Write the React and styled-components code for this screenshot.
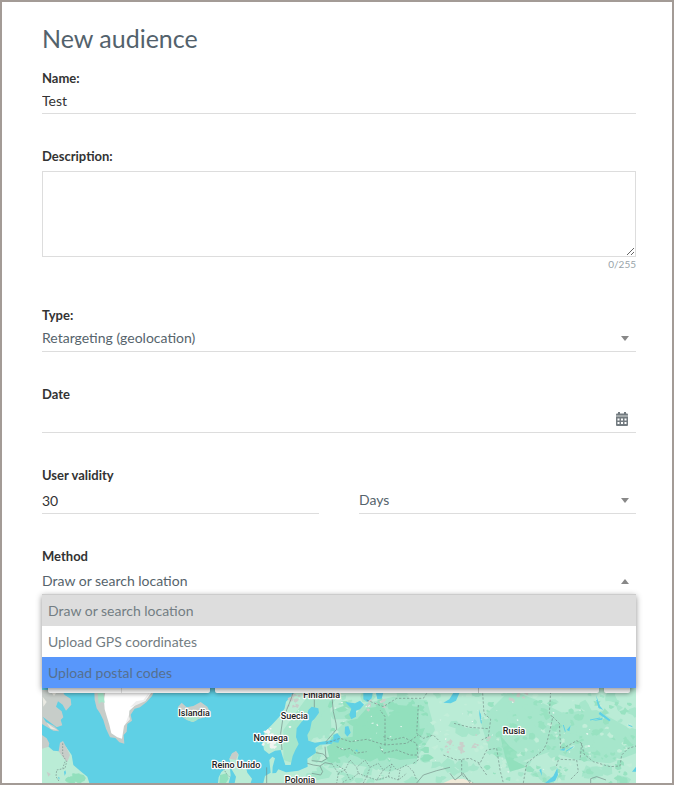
import React, { useState } from "react";
import styled, { createGlobalStyle } from "styled-components";

const GlobalStyle = createGlobalStyle`
  * {
    box-sizing: border-box;
  }

  body {
    margin: 0;
    background: #ffffff;
    font-family: Lato, "Liberation Sans", sans-serif;
    font-size: 14px;
    color: #333333;
  }

  input, select, textarea, button {
    font: inherit;
    color: inherit;
  }
`;

const Page = styled.main`
  display: flex;
  flex-direction: column;
  height: 100vh;
  overflow: hidden;
  border: 2px solid #a39b96;
  padding: 20px 36px 0 40px;
`;

const Title = styled.h1`
  margin: 0 0 14px;
  font-weight: 400;
  font-size: 25px;
  line-height: 32px;
  color: #53626c;
`;

const Form = styled.form`
  display: flex;
  flex-direction: column;
  gap: 32px;
`;

const Field = styled.div`
  display: flex;
  flex-direction: column;
`;

const Label = styled.label`
  font-weight: 700;
  font-size: 13px;
  line-height: 20px;
  color: #333333;
`;

const Columns = styled.div`
  display: grid;
  grid-template-columns: 1fr 1fr;
  gap: 40px;
`;

const Control = styled.div`
  position: relative;
  display: flex;
  height: ${({ $height }) => $height || 29}px;
  padding-bottom: ${({ $height }) => ($height ? 2 : 0)}px;
  border-bottom: 1px solid #dddddd;
`;

const TextInput = styled.input`
  flex: 1;
  min-width: 0;
  padding: 2px 0 0;
  border: 0;
  outline: 0;
  background: transparent;
`;

const Select = styled.select`
  flex: 1;
  min-width: 0;
  padding: 0;
  border: 0;
  outline: 0;
  appearance: none;
  background: transparent;
  color: #56646c;
`;

const Caret = styled.span`
  position: absolute;
  right: 7px;
  bottom: 10px;
  border: 4px solid transparent;
  border-top: ${({ $open }) => ($open ? "0" : "5px solid #888888")};
  border-bottom: ${({ $open }) => ($open ? "5px solid #888888" : "0")};
  pointer-events: none;
`;

const TextArea = styled.textarea`
  height: 86px;
  margin-top: 5px;
  padding: 6px;
  border: 1px solid #dddddd;
  border-radius: 0;
  outline: 0;
  resize: vertical;
`;

const Counter = styled.span`
  align-self: flex-end;
  margin-bottom: 2px;
  font-size: 10px;
  line-height: 14px;
  color: #98a3a9;
`;

const IconButton = styled.button`
  display: flex;
  align-items: center;
  padding: 2px 8px 0;
  border: 0;
  background: transparent;
  color: #737b80;
  cursor: pointer;
`;

const Menu = styled.ul`
  position: absolute;
  z-index: 2;
  top: 100%;
  left: 0;
  right: 0;
  margin: 0;
  padding: 0;
  list-style: none;
  background: #ffffff;
  border-top: 1px solid #cccccc;
  box-shadow: 0 2px 6px rgba(0, 0, 0, 0.45);
`;

const Option = styled.li`
  padding: 0 6px;
  line-height: 31px;
  color: ${({ $active }) => ($active ? "#56708f" : "#737d83")};
  background: ${({ $active, $selected }) =>
    $active ? "#5897fb" : $selected ? "#dddddd" : "#ffffff"};
  cursor: pointer;
`;

const MapPanel = styled.section`
  position: relative;
  flex: 1;
  min-height: 0;
  margin-top: 48px;
  overflow: hidden;
  background: #5fd0e5;
`;

const MapDrawing = styled.svg`
  display: block;
  width: 100%;
  height: 100%;
`;

const MapBar = styled.div`
  position: absolute;
  top: 10px;
  left: 6px;
  right: 6px;
  display: flex;
  gap: 5px;
  height: 40px;
`;

const MapGroup = styled.div`
  display: flex;
  flex: ${({ $flex }) => $flex || "none"};
  border-radius: 2px;
  background: #ffffff;
  box-shadow: 0 1px 4px rgba(0, 0, 0, 0.3);
`;

const MapButton = styled.button`
  width: ${({ $width }) => $width}px;
  padding: 0;
  border: 0;
  border-right: 1px solid #e0e0e0;
  background: transparent;

  &:last-child {
    border-right: 0;
  }
`;

const MapSearch = styled.input`
  flex: 1;
  min-width: 0;
  border: 0;
  border-right: 1px solid #cccccc;
  background: transparent;
`;

const Place = styled.text`
  font-family: Roboto, "Liberation Sans", sans-serif;
  font-weight: 500;
  font-size: 27px;
  text-anchor: middle;
  fill: #222222;
  stroke: #ffffff;
  stroke-width: 7px;
  stroke-linejoin: round;
  paint-order: stroke;
`;

const methods = [
  "Draw or search location",
  "Upload GPS coordinates",
  "Upload postal codes",
];

const places = [
  ["Islandia", 492, 108],
  ["Reino Unido", 618, 264],
  ["Noruega", 722, 183],
  ["Suecia", 793, 118],
  ["Finlandia", 875, 55],
  ["Polonia", 810, 308],
  ["Rusia", 1452, 162],
];

// small irregular patches of vegetation, seeded so they never move
const patches = (seed, count, [x0, y0, x1, y1], size) => {
  let s = seed;
  const next = () => {
    s = (s * 16807) % 2147483647;
    return s / 2147483647;
  };
  let d = "";
  for (let i = 0; i < count; i++) {
    const cx = x0 + next() * (x1 - x0);
    const cy = y0 + next() * (y1 - y0);
    const r = size * (0.4 + next());
    for (let k = 0; k < 8; k++) {
      const a = (k * Math.PI) / 4;
      const q = r * (0.4 + next() * 0.9);
      const x = Math.round(cx + Math.cos(a) * q * 1.3);
      const y = Math.round(cy + Math.sin(a) * q);
      d += `${k ? "L" : "M"}${x} ${y}`;
    }
    d += "Z";
  }
  return d;
};

const CalendarIcon = () => (
  <svg width="12" height="14" viewBox="0 0 12 14" aria-hidden="true">
    <path d="M2 0h2v2H2zM8 0h2v2H8z" fill="currentColor" />
    <path d="M0 2.5Q0 1.5 1 1.5h10q1 0 1 1V4H0z" fill="currentColor" />
    <path d="M0 3h12v2.2H0z" fill="#a3a9ab" />
    <path
      fillRule="evenodd"
      fill="currentColor"
      d="M0 5h12v8q0 1-1 1H1q-1 0-1-1zM1.5 6.5v2h2v-2zM5 6.5v2h2v-2zM8.5 6.5v2h2v-2zM1.5 10v2h2v-2zM5 10v2h2v-2zM8.5 10v2h2v-2z"
    />
  </svg>
);

const WorldMap = () => (
  <MapDrawing
    viewBox="36 -111 1782 420"
    preserveAspectRatio="xMidYMin slice"
    role="img"
    aria-label="Map"
  >
    <rect x="36" y="-111" width="1782" height="900" fill="#baecd6" />

    {/* forests */}
    <path
      fill="#a6e6cb"
      d="M900 170L960 110 1010 70 1090 50 1190 60 1215 150 1150 250 1080 275 930 245ZM1440 30L1520 60 1600 100 1700 90 1790 140 1818 150V220L1740 250 1640 240 1560 215 1460 250 1380 220 1350 120ZM760 150L840 40 900 60 905 160 850 175 790 250 760 240Z"
    />
    <path fill="#a6e6cb" d={patches(7, 150, [840, 40, 1818, 309], 14)} />
    <path fill="#c2eed9" d={patches(93, 80, [850, 40, 1818, 309], 6)} />
    <path
      fill="#92e0bd"
      d="M970 130L1010 85 1060 78 1075 110 1105 75 1165 80 1170 165 1160 235 1110 240 1060 225 1020 245 960 222 900 240 890 200 930 175 968 170ZM1410 165L1440 200 1460 215 1450 240 1490 260 1440 275 1425 230Z"
    />
    <path fill="#92e0bd" d={patches(31, 75, [900, 60, 1200, 250], 11)} />
    <path fill="#98e2c1" d={patches(67, 100, [1370, 60, 1818, 309], 8)} />
    <path fill="#c9cfca" d={patches(19, 17, [1250, 182, 1300, 218], 5)} />
    <path fill="#c9cfca" d={patches(23, 9, [1010, 58, 1065, 92], 5)} />
    <path fill="#c9cfca" d={patches(29, 8, [1445, 38, 1495, 62], 6)} />
    <path fill="#c9cfca" d={patches(37, 8, [1330, 165, 1385, 205], 5)} />
    <path fill="#e8f7ef" d={patches(41, 55, [780, 50, 1700, 280], 2)} />
    <path fill="#f0e9d8" d="M1240 309L1265 298 1300 296 1330 309Z" />

    {/* seas and lakes */}
    <g fill="#5fd0e5">
      <path d="M36 -111H800V30L778 55 768 65 764 85 750 108 725 135 705 155 697 180 702 210 717 222 735 212 752 210 758 230 766 255 782 255 788 228 796 210 806 192 798 172 800 145 815 125 830 112 835 90 845 80 865 85 867 98 855 115 845 125 840 150 832 165 835 182 855 188 895 182 915 176 905 192 870 194 856 204 858 218 844 228 832 236 833 260 805 272 768 277 745 268 738 279 727 280 728 260 735 235 727 230 718 240 722 278 705 288 700 309H36Z" />
      <path d="M946 66L975 70 990 62 1002 74 990 88 978 92 978 110 964 118 958 104 964 86Z" />
      <path d="M1000 30H1030L1025 55 1012 66 1000 58ZM1036 30H1062L1055 56 1042 58Z" />
      <path d="M910 165L922 160 932 172 925 188 910 186ZM945 140L955 138 962 158 952 170 944 160Z" />
      <path d="M1272 35H1290L1278 62 1262 70 1240 68 1258 58Z" />
      <path d="M1698 45L1710 78 1720 90 1706 84ZM1710 95L1742 120 1738 124 1706 102ZM1688 123L1718 113 1716 119ZM1582 264L1584 285 1575 303 1556 309H1545L1570 288ZM1528 270L1534 266 1536 288ZM1588 210L1606 204 1603 212ZM1610 150L1622 136 1618 154ZM1818 260L1806 275H1818ZM1347 88L1354 110 1350 120ZM975 212L981 208 984 216Z" />
    </g>
    <path
      fill="none"
      stroke="#5fd0e5"
      strokeWidth="3"
      d="M1350 100l4 30M1700 60l8 25M1600 135l6 20M1630 200l-22 14M1680 120l30-6M1795 135l12 5"
    />

    {/* north america */}
    <path
      fill="#c7cdc9"
      d="M36 30H95L104 45 122 56 124 74 108 92 98 74 84 64 78 80 95 94 100 112 92 120 97 136 80 142 56 124 38 110 48 126 72 138 88 154 70 152 36 132ZM36 165L50 175 58 190 55 204 36 208Z"
    />
    <path
      fill="#e9e9e2"
      d="M38 50L50 66 40 80ZM60 30L72 48 78 40ZM50 128L66 140 82 150 62 146Z"
    />
    <path
      fill="#baecd6"
      d="M36 206L56 200 70 212 88 214 92 195 108 200 125 225 130 255 150 272 172 290 178 309H36Z"
    />
    <path fill="#c7cdc9" d="M86 214L90 188 99 183 108 200 120 225 112 245 102 236Z" />
    <path fill="#c7cdc9" d="M50 275L62 282 55 290Z" />
    <path fill="#92e0bd" d={patches(5, 16, [115, 285, 160, 309], 9)} />
    <path fill="#5fd0e5" d="M102 275l4-4 2 8-4 8zM84 290l5 3-2 7z" />

    {/* greenland */}
    <path
      fill="#c7cdc9"
      d="M193 35H372L366 48 350 66 330 82 314 86 302 104 306 122 292 132 290 155 281 165 283 191 268 187 256 174 240 172 228 146 220 120 210 100 200 85 194 60Z"
    />
    <path
      fill="#ffffff"
      d="M226 35H366L346 62 326 66 298 92 296 120 282 138 276 176 262 172 244 160 238 134 230 108 224 88 222 60Z"
    />
    <path fill="#eeeeee" d="M360 35L340 60 318 64 300 82 318 76 345 64ZM296 105L300 118 286 132Z" />
    <path fill="#a6e6cb" d="M203 38L220 38 224 68 214 66 206 72Z" />

    {/* iceland and the british isles */}
    <path
      fill="#c7cdc9"
      d="M443 82L455 68 470 82 490 78 512 66 532 80 540 96 524 112 504 118 490 126 470 120 450 106 460 96Z"
    />
    <path fill="#a6e6cb" d="M462 110L480 106 508 112 498 122 486 126 468 118Z" />
    <path
      fill="#baecd6"
      d="M598 238L606 222 618 214 626 224 622 242 646 256 652 278 666 296 662 309H614L618 290 606 270ZM566 292L574 276 586 266 600 268 602 286 596 309H564Z"
    />
    <path fill="#c7cdc9" d="M598 236L606 220 618 213 625 222 618 240Z" />
    <path fill="#92e0bd" d="M570 285L590 280 596 296 588 309H568Z" />
    <path fill="#c7cdc9" d={patches(53, 9, [770, 45, 810, 85], 6)} />
    <path fill="#f2f5f1" d={patches(59, 12, [700, 145, 735, 205], 6)} />

    {/* borders */}
    <g fill="none" stroke="#748c87" strokeWidth="2" strokeLinejoin="round">
      <path d="M790 35L782 60 770 90 758 120 752 160 756 210M853 35V82M905 40L910 95 918 130 920 148 905 165 888 185M858 218L880 222 892 235 875 245 845 242M832 250L850 255 870 258 885 248 905 252M870 258L878 275 872 285 845 280M710 262V309M885 200L888 235M1160 309L1180 285 1220 272 1260 262M1260 280L1275 300 1300 280 1320 309M1682 309V296L1700 290 1728 300" />
      <path
        strokeDasharray="7 5"
        d="M888 190L930 175 962 185 1010 178 1065 195 1130 190 1165 165M1065 195V110L1050 90M1060 170L1085 180 1120 172 1160 190 1165 240 1150 250M920 200L940 210 960 205 975 220 1010 215M1050 200L1060 220 1100 210 1140 225 1165 225M1010 60L1060 80 1100 55H1180L1190 40M1165 75L1160 160 1180 175 1210 165 1230 185M1272 130L1320 142 1375 146M1358 40L1362 100 1382 118 1375 170 1355 180M1562 35L1558 100 1568 112 1560 150 1550 190 1540 210 1490 250 1480 309M1568 110L1588 130 1592 205 1605 202 1640 182 1655 190 1662 222 1690 245 1740 260 1770 258 1775 225 1795 205 1818 198M1592 238L1640 240 1645 275 1620 300M1585 240L1578 262M1240 225L1280 240 1320 235 1350 250 1370 210 1400 205 1410 270 1420 309M1295 240V285L1330 309M1345 250L1370 285M1655 190L1650 240"
      />
      <path
        strokeDasharray="5 4"
        d="M920 255L945 270 960 240 980 262 1005 240 1020 262 1045 250 1060 270 1085 252 1100 270 1130 255 1150 275M905 250L925 280 945 270 960 300 985 280 980 262M985 280L1010 290 1020 262M1010 290L1040 300 1060 270M1040 300L1075 290 1085 252M1075 290L1105 300 1130 280M925 280L920 309M1105 300L1110 270M1150 275L1160 300M950 300L935 309M1000 309L1010 290M98 190V225L110 245 105 265 80 270 78 290 88 305M105 245L98 265M580 265L590 282 598 290"
      />
    </g>

    {places.map(([name, x, y]) => (
      <Place key={name} x={x} y={y}>
        {name}
      </Place>
    ))}
  </MapDrawing>
);

const SelectField = ({ id, label, options, height }) => (
  <Control $height={height}>
    <Select id={id} aria-label={label}>
      {options.map((option) => (
        <option key={option}>{option}</option>
      ))}
    </Select>
    <Caret />
  </Control>
);

const App = () => {
  const [name, setName] = useState("Test");
  const [description, setDescription] = useState("");
  const [method, setMethod] = useState(methods[0]);
  const [active, setActive] = useState(methods[2]);
  const [open, setOpen] = useState(true);

  const choose = (option) => {
    setMethod(option);
    setOpen(false);
  };

  return (
    <>
      <GlobalStyle />
      <Page>
        <Title>New audience</Title>
        <Form onSubmit={(e) => e.preventDefault()}>
          <Field>
            <Label htmlFor="name">Name:</Label>
            <Control $height={26}>
              <TextInput
                id="name"
                value={name}
                onChange={(e) => setName(e.target.value)}
              />
            </Control>
          </Field>

          <Field>
            <Label htmlFor="description">Description:</Label>
            <TextArea
              id="description"
              maxLength={255}
              value={description}
              onChange={(e) => setDescription(e.target.value)}
            />
            <Counter>{description.length}/255</Counter>
          </Field>

          <Field>
            <Label htmlFor="type">Type:</Label>
            <SelectField
              id="type"
              height={27}
              options={["Retargeting (geolocation)"]}
            />
          </Field>

          <Field>
            <Label htmlFor="date">Date</Label>
            <Control>
              <TextInput id="date" />
              <IconButton type="button" aria-label="Open calendar">
                <CalendarIcon />
              </IconButton>
            </Control>
          </Field>

          <Field>
            <Label htmlFor="validity">User validity</Label>
            <Columns>
              <Control>
                <TextInput id="validity" defaultValue="30" />
              </Control>
              <SelectField id="unit" label="Validity unit" options={["Days"]} />
            </Columns>
          </Field>

          <Field>
            <Label htmlFor="method">Method</Label>
            <Control>
              <Select
                id="method"
                value={method}
                onMouseDown={(e) => {
                  e.preventDefault();
                  setOpen(!open);
                }}
                onChange={(e) => setMethod(e.target.value)}
              >
                {methods.map((option) => (
                  <option key={option}>{option}</option>
                ))}
              </Select>
              <Caret $open={open} />
              {open && (
                <Menu role="listbox" aria-label="Method">
                  {methods.map((option) => (
                    <Option
                      key={option}
                      role="option"
                      aria-selected={option === method}
                      $selected={option === method}
                      $active={option === active}
                      onMouseEnter={() => setActive(option)}
                      onClick={() => choose(option)}
                    >
                      {option}
                    </Option>
                  ))}
                </Menu>
              )}
            </Control>
          </Field>
        </Form>

        <MapPanel>
          <WorldMap />
          <MapBar>
            <MapGroup>
              <MapButton $width={74} aria-label="Mapa" />
              <MapButton $width={88} aria-label="Satélite" />
            </MapGroup>
            <MapGroup $flex="1">
              <MapSearch aria-label="Search location" />
              <MapButton $width={120} aria-label="Search" />
            </MapGroup>
            <MapGroup>
              <MapButton $width={26} aria-label="Draw" />
            </MapGroup>
          </MapBar>
        </MapPanel>
      </Page>
    </>
  );
};

export default App;
